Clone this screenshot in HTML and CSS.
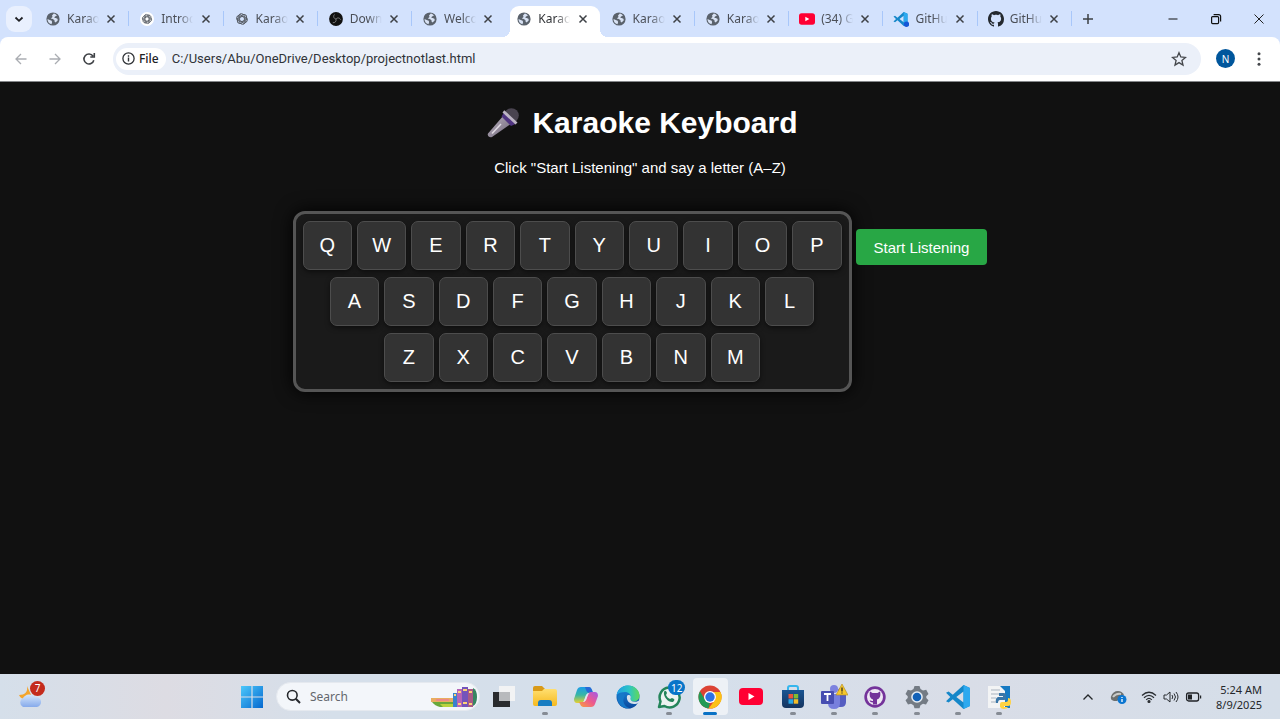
FILE: index.html
```html
<!DOCTYPE html>
<html lang="en">
<head>
<meta charset="utf-8">
<title>Karaoke Keyboard</title>
<link rel="stylesheet" href="styles.css">
</head>
<body>
<svg class="defs" aria-hidden="true">
  <defs>
    <linearGradient id="win" x1="0" y1="0" x2="1" y2="1"><stop offset="0" stop-color="#4cc8fb"/><stop offset="1" stop-color="#0568cf"/></linearGradient>
    <linearGradient id="cloud" x1="0" y1="0" x2="0" y2="1"><stop offset="0" stop-color="#d5e6fb"/><stop offset="1" stop-color="#86aaeb"/></linearGradient>
    <linearGradient id="folder" x1="0" y1="0" x2="0" y2="1"><stop offset="0" stop-color="#ffdf70"/><stop offset="1" stop-color="#f6b91f"/></linearGradient>
    <linearGradient id="cpa" x1="0" y1="0" x2="0" y2="1"><stop offset="0" stop-color="#1b9de8"/><stop offset=".5" stop-color="#37b6a5"/><stop offset="1" stop-color="#e8d12e"/></linearGradient>
    <linearGradient id="cpb" x1="1" y1="0" x2="0" y2="1"><stop offset="0" stop-color="#a259e8"/><stop offset=".5" stop-color="#ee5a8d"/><stop offset="1" stop-color="#f9a13c"/></linearGradient>
    <linearGradient id="edgea" x1="0" y1="0" x2="1" y2="0"><stop offset="0" stop-color="#1e9de6"/><stop offset=".55" stop-color="#2cc5c5"/><stop offset="1" stop-color="#62d957"/></linearGradient>
    <linearGradient id="edgeb" x1="0" y1="0" x2="0" y2="1"><stop offset="0" stop-color="#1b8ee0"/><stop offset="1" stop-color="#0c479b"/></linearGradient>
    <linearGradient id="store" x1="0" y1="0" x2="0" y2="1"><stop offset="0" stop-color="#1a5592"/><stop offset="1" stop-color="#15345f"/></linearGradient>
    <linearGradient id="mic" x1="0" y1="0" x2="1" y2="1"><stop offset="0" stop-color="#bdb5c2"/><stop offset="1" stop-color="#6c6376"/></linearGradient>
  </defs>
  <symbol id="globe" viewBox="0 0 14 14"><circle cx="7" cy="7" r="6.6" fill="#5a626c"/><path d="M7.8 1.6 6 3.5l.5 1.4L4.8 6.6l2 .4 1.7 1.2v1.2l1.2 1.1 2.100-2.200-.4-1.600-1.700-.8L8.400 6l.5-1.600 2-.7C10.300 2.700 9 1.800 7.800 1.600zM1.500 6.900l2.200 1.200 2 .6.4 1.600-.6 1.900C3 11.500 1.500 9.600 1.500 6.900z" fill="#d8e2f4"/></symbol>
  <symbol id="knot" viewBox="0 0 14 14"><g fill="none" stroke="currentColor" stroke-width=".9"><path id="petal" d="M7 4.300 10.300 6.200V9.900c0 1.900-2.200 3.100-3.900 2.100L3.700 10.400"/><use href="#petal" transform="rotate(60 7 7)"/><use href="#petal" transform="rotate(120 7 7)"/><use href="#petal" transform="rotate(180 7 7)"/><use href="#petal" transform="rotate(240 7 7)"/><use href="#petal" transform="rotate(300 7 7)"/></g></symbol>
  <symbol id="close" viewBox="0 0 10 10"><path d="M1.500 1.500l7 7M8.500 1.500l-7 7" stroke="currentColor" stroke-width="1.500"/></symbol>
  <symbol id="vscode" viewBox="0 0 24 24"><path d="M17.500 0 24 3v18l-6.500 3L6.800 14.300 2.600 17.600 0 16.300 4.300 12 0 7.700l2.600-1.300 4.200 3.300zM17.500 6.500 10.300 12l7.200 5.500z" fill="#1587c9" fill-rule="evenodd"/><path d="M17.500 0 24 3v18l-6.500 3z" fill="#2da9ef"/></symbol>
  <symbol id="yt" viewBox="0 0 24 17"><rect width="24" height="17" rx="4" fill="#ff0033"/><path d="M9.500 5v7L15.500 8.500z" fill="#fff"/></symbol>
  <symbol id="github" viewBox="0 0 16 16"><path fill="currentColor" d="M8 0C3.580 0 0 3.580 0 8c0 3.540 2.290 6.530 5.470 7.590.4.070.55-.17.55-.38 0-.19-.01-.82-.01-1.490-2.010.37-2.530-.49-2.690-.94-.09-.23-.48-.94-.82-1.130-.28-.15-.68-.52-.01-.53.63-.01 1.080.58 1.230.82.72 1.210 1.870.87 2.330.66.07-.52.28-.87.51-1.070-1.780-.2-3.640-.89-3.640-3.950 0-.87.31-1.590.82-2.150-.08-.2-.36-1.020.08-2.120 0 0 .67-.21 2.200.82.64-.18 1.320-.27 2-.27s1.360.09 2 .27c1.530-1.040 2.200-.82 2.200-.82.44 1.100.16 1.920.08 2.120.51.56.82 1.270.82 2.150 0 3.070-1.870 3.750-3.650 3.950.29.25.54.73.54 1.480 0 1.070-.01 1.930-.01 2.200 0 .21.15.46.55.38A8.010 8.010 0 0 0 16 8c0-4.420-3.580-8-8-8z"/></symbol>
</svg>

<header class="browser">
  <div class="tabstrip">
    <button class="tab-search" aria-label="Search tabs"><svg width="10" height="10" viewBox="0 0 10 10"><path d="M1.500 3.500 5 6.800l3.500-3.300" fill="none" stroke="#1f2023" stroke-width="1.800"/></svg></button>
    <nav class="tabs" aria-label="Tabs">
      <div class="tab"><svg class="fav"><use href="#globe"/></svg><button class="tab-title">Karao</button><button class="tab-close" aria-label="Close"><svg><use href="#close"/></svg></button></div>
      <div class="tab"><svg class="fav fav-white"><use href="#knot"/></svg><button class="tab-title">Introd</button><button class="tab-close" aria-label="Close"><svg><use href="#close"/></svg></button></div>
      <div class="tab"><svg class="fav"><use href="#knot"/></svg><button class="tab-title">Karao</button><button class="tab-close" aria-label="Close"><svg><use href="#close"/></svg></button></div>
      <div class="tab"><svg class="fav" viewBox="0 0 14 14"><circle cx="7" cy="7" r="6.900" fill="#111"/><g fill="none" stroke="#858585" stroke-width=".9"><path d="M7 7c-2.500-.5-3-3-1.500-4.500M7 7c1.700-1.900 4-1 4.700.8M7 7c.7 2.400-1.200 4-3.200 3.700"/></g></svg><button class="tab-title">Down</button><button class="tab-close" aria-label="Close"><svg><use href="#close"/></svg></button></div>
      <div class="tab plain"><svg class="fav"><use href="#globe"/></svg><button class="tab-title">Welco</button><button class="tab-close" aria-label="Close"><svg><use href="#close"/></svg></button></div>
      <div class="tab plain active"><svg class="fav"><use href="#globe"/></svg><button class="tab-title">Karao</button><button class="tab-close" aria-label="Close"><svg><use href="#close"/></svg></button></div>
      <div class="tab"><svg class="fav"><use href="#globe"/></svg><button class="tab-title">Karao</button><button class="tab-close" aria-label="Close"><svg><use href="#close"/></svg></button></div>
      <div class="tab"><svg class="fav"><use href="#globe"/></svg><button class="tab-title">Karao</button><button class="tab-close" aria-label="Close"><svg><use href="#close"/></svg></button></div>
      <div class="tab"><svg class="fav wide"><use href="#yt"/></svg><button class="tab-title">(34) G</button><button class="tab-close" aria-label="Close"><svg><use href="#close"/></svg></button></div>
      <div class="tab"><svg class="fav wide" viewBox="0 0 16 16"><use href="#vscode" width="15" height="14" y="1"/><circle cx="13.500" cy="13.300" r="2.700" fill="#1557d6"/></svg><button class="tab-title">GitHu</button><button class="tab-close" aria-label="Close"><svg><use href="#close"/></svg></button></div>
      <div class="tab"><svg class="fav wide dark"><use href="#github"/></svg><button class="tab-title">GitHu</button><button class="tab-close" aria-label="Close"><svg><use href="#close"/></svg></button></div>
    </nav>
    <button class="new-tab" aria-label="New tab"><svg width="12" height="12" viewBox="0 0 12 12"><path d="M6 1v10M1 6h10" stroke="#3c4043" stroke-width="1.500"/></svg></button>
    <div class="window-controls">
      <button aria-label="Minimize"><svg width="12" height="12" viewBox="0 0 12 12"><path d="M1.500 6h9" stroke="#111" stroke-width="1"/></svg></button>
      <button aria-label="Restore"><svg width="12" height="12" viewBox="0 0 12 12" fill="none" stroke="#111" stroke-width="1.200"><rect x="1.600" y="3.600" width="7" height="7" rx="1"/><path d="M3.600 1.600h5c1.200 0 2 .8 2 2v5"/></svg></button>
      <button aria-label="Close window"><svg width="12" height="12" viewBox="0 0 12 12"><path d="M1.500 1.500l9 9M10.500 1.500l-9 9" stroke="#222" stroke-width="1"/></svg></button>
    </div>
  </div>
  <div class="toolbar">
    <div class="nav-buttons">
      <button aria-label="Back"><svg width="14" height="14" viewBox="0 0 14 14" fill="none" stroke="#aaadb2" stroke-width="1.300"><path d="M12.500 7H2M7 2 2 7l5 5"/></svg></button>
      <button aria-label="Forward"><svg width="14" height="14" viewBox="0 0 14 14" fill="none" stroke="#aaadb2" stroke-width="1.300"><path d="M1.500 7H12M7 2l5 5-5 5"/></svg></button>
      <button aria-label="Reload"><svg width="14" height="14" viewBox="0 0 14 14" fill="none" stroke="#3f4246" stroke-width="1.600"><path d="M11.800 8.200A5 5 0 1 1 11 4M12.300 1v4H8.300"/></svg></button>
    </div>
    <div class="omnibox">
      <button class="chip"><svg width="13" height="13" viewBox="0 0 13 13"><circle cx="6.500" cy="6.500" r="5.600" fill="none" stroke="#2f3236" stroke-width="1.300"/><path d="M6.500 5.600v4M6.500 3.300v1.400" stroke="#2f3236" stroke-width="1.400"/></svg>File</button>
      <input class="url" aria-label="Address" value="C:/Users/Abu/OneDrive/Desktop/projectnotlast.html">
      <button class="star" aria-label="Bookmark"><svg width="16" height="16" viewBox="0 0 16 16"><path d="M8 1.700l1.800 4.300 4.700.4-3.600 3.100 1.100 4.600L8 11.600l-4 2.500 1.100-4.600L1.500 6.400 6.200 6z" fill="none" stroke="#44474b" stroke-width="1.300"/></svg></button>
    </div>
    <button class="avatar" aria-label="Profile">N</button>
    <button class="menu" aria-label="Menu"><svg width="4" height="16" viewBox="0 0 4 16" fill="#44474b"><circle cx="2" cy="2.800" r="1.500"/><circle cx="2" cy="8" r="1.500"/><circle cx="2" cy="13.200" r="1.500"/></svg></button>
  </div>
</header>

<main class="page">
  <h1><svg width="34" height="32" viewBox="0 0 34 32" aria-hidden="true"><path d="M2 26.500 17.500 8.500l8 8L6 30c-2.500 1.200-5-1.300-4-3.500z" fill="url(#mic)"/><circle cx="25.500" cy="8.500" r="7.300" fill="#4a4450"/><path d="M15.500 9.500 18 5.500 29.500 17l-4.500 2z" fill="#4f3480"/><path d="M18.300 3.300 31.500 15.500l-2 2L16.500 5.500z" fill="#bdb5c4"/><path d="M6 26.500 15 17" stroke="#e0dbe4" stroke-width="1.500"/></svg>Karaoke Keyboard</h1>
  <p class="hint">Click "Start Listening" and say a letter (A–Z)</p>
  <div class="stage">
    <div class="keyboard">
      <button class="key">Q</button><button class="key">W</button><button class="key">E</button><button class="key">R</button><button class="key">T</button><button class="key">Y</button><button class="key">U</button><button class="key">I</button><button class="key">O</button><button class="key">P</button>
      <button class="key home">A</button><button class="key">S</button><button class="key">D</button><button class="key">F</button><button class="key">G</button><button class="key">H</button><button class="key">J</button><button class="key">K</button><button class="key">L</button>
      <button class="key bottom">Z</button><button class="key">X</button><button class="key">C</button><button class="key">V</button><button class="key">B</button><button class="key">N</button><button class="key">M</button>
    </div>
    <button class="listen">Start Listening</button>
  </div>
</main>

<footer class="taskbar">
  <div class="task-left">
    <button class="weather" aria-label="Weather"><svg width="26" height="28" viewBox="0 0 26 28"><path d="M10 5c1 6-2 9-8 9 2 5 9 6 13 2z" fill="#f3a52d"/><path d="M6 26a5 5 0 0 1 0-9 7 6 0 0 1 12-1 5 5 0 0 1 2 10z" fill="url(#cloud)"/></svg><span class="badge red">7</span></button>
  </div>
  <div class="task-center">
    <button class="start" aria-label="Start"><svg width="22" height="22" viewBox="0 0 22 22"><path d="M0 0h10.400v10.400H0zM11.600 0H22v10.400H11.600zM0 11.600h10.400V22H0zM11.600 11.600H22V22H11.600z" fill="url(#win)"/></svg></button>
    <label class="search"><svg width="15" height="15" viewBox="0 0 15 15" fill="none" stroke="#25282c"><circle cx="6.300" cy="6.300" r="4.800" stroke-width="1.600"/><path d="M9.800 9.800 14 14" stroke-width="2"/></svg><input type="text" placeholder="Search" aria-label="Search"><svg class="books" width="48" height="22" viewBox="0 0 48 22"><path d="M1 16q12-2 24 0v5H9q-5-1-8-5z" fill="#68a83a"/><path d="M0 12h22v4H0z" fill="#e9ad60"/><path d="M5 13h13v2H5z" fill="#ec8a87"/><path d="M9 18h13v3H12z" fill="#b9d23d"/><path d="M22 7h4v14h-4z" fill="#3a82cd"/><path d="M26 3h5v18h-5z" fill="#b565b8"/><path d="M31 1h6v20h-6z" fill="#7454bb"/><path d="M37 3h5v18h-5z" fill="#aa5a86"/><path d="M42 2q4 2 4 9t-4 9z" fill="#388562"/><path d="M23 9h2M27 6h3M27 18h3M32 4h4M32 17h4M38 6h3M38 18h3" stroke="#ffd276" stroke-width="2"/></svg></label>
    <div class="apps">
      <button class="app" aria-label="Task view"><svg width="24" height="24" viewBox="0 0 24 24"><path d="M1 7h17v15H1z" fill="#292b2e"/><path d="M7 1h16v15H7z" fill="#f2f3f4"/><path d="M7 7h11v9H7z" fill="#b8babd"/></svg></button>
      <button class="app running" aria-label="File Explorer"><svg width="24" height="24" viewBox="0 0 24 24"><path d="M0 3q0-2 2-2h7l3 3-2 4H0z" fill="#d99a18"/><path d="M0 6h9l2-2h11q2 0 2 2v13q0 2-2 2H2q-2 0-2-2z" fill="url(#folder)"/><path d="M5 21v-3q0-3 3-3h8q3 0 3 3v3z" fill="#187dc2"/></svg></button>
      <button class="app" aria-label="Copilot"><svg width="24" height="24" viewBox="0 0 24 24"><path d="M7 2h8q2 0 3 3l1 3h-4q-2 0-3 2l-2 6q-1 2-3 2H3q-3 0-3-4l3-9q1-3 4-3z" fill="url(#cpa)"/><path d="M11 2h4q2 0 3 3l1 3h-4q-2 0-3-3z" fill="#2769d6"/><path d="M17 22H9q-2 0-3-3l-1-2h4q2 0 3-2l2-6q1-2 3-2h4q3 0 3 4l-3 8q-1 3-4 3z" fill="url(#cpb)"/><path d="M12 10.500q1-2.500 3.500-2.500-1 1-1.500 2l-2 5q-1 1.800-3 2 .7-.7 1-1.500z" fill="#dfe6f0"/></svg></button>
      <button class="app" aria-label="Edge"><svg width="24" height="24" viewBox="0 0 24 24"><circle cx="12" cy="12" r="11.500" fill="url(#edgeb)"/><path d="M.6 10C2 3 7 .5 12 .5c7 0 11.500 5 11.500 10 0 4-3 6-6 6-3 0-4-1.500-3-3 1-4-2-6.500-5.500-6.500S2 8 .6 10z" fill="url(#edgea)"/><path d="M9 11c-4 5 0 12 6 12-8 2-15-5-13-12 2-4 7-3 7 0z" fill="#1678c8"/><path d="M11 11c-1 5 3 8 7 8 2 0 3.500-.7 4.600-1.600 1-1.200.7-2-.4-1.500-4 1.800-8.200.6-7.700-2.400 1-2-.5-4-2-3.500-.7.200-1.200.4-1.500 1z" fill="#d7e1eb"/></svg></button>
      <button class="app running" aria-label="WhatsApp"><svg width="26" height="26" viewBox="0 0 26 26"><path d="M3 23l1.500-5.500A10 10 0 1 1 8.500 22z" fill="#edf3f1" stroke="#24855a" stroke-width="2.500" stroke-linejoin="round"/><path d="M8 8c1-2 2-1.500 3 1l-1 2c1 2 2 3 4 4l2-1c3 1 3 2 1 4-4 1-10-5-9-10z" fill="#24855a"/></svg><span class="badge blue">12</span></button>
      <button class="app running current" aria-label="Chrome"><svg width="24" height="24" viewBox="0 0 24 24"><circle cx="12" cy="12" r="11.500" fill="#dc4335"/><path d="M2 6.300 7.200 15A6 6 0 0 0 12 18l-1.500 5.500A11.500 11.500 0 0 1 2 6.300z" fill="#229a55"/><path d="M22.500 7A11.500 11.500 0 0 1 10.500 23.400L17 15q1.700-4-1.500-8z" fill="#fbc116"/><circle cx="12" cy="12" r="6" fill="#fff"/><circle cx="12" cy="12" r="4.700" fill="#2e71e5"/></svg></button>
      <button class="app" aria-label="YouTube"><svg width="24" height="17"><use href="#yt"/></svg></button>
      <button class="app running" aria-label="Store"><svg width="24" height="24" viewBox="0 0 24 24"><path d="M7 7V3q0-2 2-2h6q2 0 2 2v4" fill="none" stroke="#35b6ed" stroke-width="2"/><path d="M1 5h22v14q0 4-4 4H5q-4 0-4-4z" fill="url(#store)"/><path d="M7.500 9H12v4.500H7.500z" fill="#e9553b"/><path d="M12.700 9h4.500v4.500h-4.500z" fill="#7fbb32"/><path d="M7.500 14.200H12v4.500H7.500z" fill="#28a8e8"/><path d="M12.700 14.200h4.500v4.500h-4.500z" fill="#f4bd29"/></svg></button>
      <button class="app running" aria-label="Teams"><svg width="28" height="26" viewBox="0 0 28 26"><circle cx="21" cy="7" r="3" fill="#5b61c5"/><circle cx="14" cy="5" r="4" fill="#7c82df"/><path d="M16 11h10v7q0 5-5 5h-5z" fill="#555dc1"/><path d="M8 10h12v9q0 6-6 6t-6-6z" fill="#777fdd"/><rect x="1" y="7" width="13" height="13" rx="1" fill="#474eb1"/><path d="M4 10h7M7.500 10v7" stroke="#fff" stroke-width="1.800"/><path d="M22 0 28 11H16z" fill="#f6c62c" stroke="#b28c20" stroke-width=".6"/><path d="M22 3.500v4M22 8.500v1" stroke="#222" stroke-width="1.200"/></svg></button>
      <button class="app running" aria-label="GitHub Desktop"><svg width="22" height="22" viewBox="0 0 22 22"><circle cx="11" cy="11" r="10.700" fill="#74339a"/><circle cx="11" cy="11" r="8" fill="#eee8f3"/><path d="M6 5.500 8.500 7h5L16 5.500c1 4 0 7-3 8v5H9v-2c-2 0-3-1-3.500-2 1.500 0 2 .5 3.500.5v-1.500c-3-1-4-4-3-8z" fill="#74339a"/></svg></button>
      <button class="app running" aria-label="Settings"><svg width="24" height="24" viewBox="0 0 24 24"><path d="M9.500 1h5l1 3 2.500 1.400 3.200-.6 2.300 4.200-2.200 2.200v1.800l2.200 2.300-2.500 4.200-3-.8-2.500 1.500-1 3h-5l-1-3L6 18.700l-3 .8-2.500-4.200L2.700 13v-1.800L.5 9l2.300-4.200 3.200.6L8.500 4z" fill="#747b84"/><circle cx="12" cy="12" r="5.800" fill="#e5edf5"/><circle cx="12" cy="12" r="4.300" fill="#1261b7"/></svg></button>
      <button class="app running" aria-label="Visual Studio Code"><svg width="24" height="24"><use href="#vscode"/></svg></button>
      <button class="app running" aria-label="Python IDLE"><svg width="24" height="24" viewBox="0 0 24 24"><path d="M1 1h22v22H1z" fill="#167ac3"/><path d="M1 1h12l5 5v17H1z" fill="#f3f4f5"/><path d="M4 5h9M4 9h9M4 13h5M4 17h6" stroke="#a8b3bf"/><path d="M12 8h5q2 0 2 2v4q0 1-2 1h-4q-2 0-2 3H9q-1-5 2-6h5v-1h-4z" fill="#3976a8"/><path d="M21 13q3 0 3 4t-3 4h-4v1h4q-1 2-4 2t-4-2v-3q0-2 2-2h4q2 0 2-2z" fill="#ffd343"/></svg></button>
    </div>
  </div>
  <div class="tray">
    <button class="t-chevron" aria-label="Hidden icons"><svg width="12" height="12" viewBox="0 0 12 12"><path d="M1.500 8.500 6 4l4.500 4.500" fill="none" stroke="#24272a" stroke-width="1.300"/></svg></button>
    <button class="t-drive" aria-label="OneDrive"><svg width="18" height="16" viewBox="0 0 18 16"><path d="M4 12q-4-1-3-4.500Q3 2 8 2q4 0 6 4l-7 6z" fill="#6d706f"/><path d="M3 8q3-4 8-3" stroke="#c9cbc9" stroke-width="2" fill="none"/><circle cx="12" cy="10.500" r="4.500" fill="#0b76d1"/><path d="M12 10v3M12 8v1" stroke="#fff" stroke-width="1.300"/></svg></button>
    <button class="t-status" aria-label="Network, volume, battery">
      <svg width="16" height="14" viewBox="0 0 16 14" fill="none" stroke="#292d31" stroke-width="1.200"><path d="M1 5.500Q8-1 15 5.500M3 7.700Q8 3 13 7.700M5.200 9.800Q8 7 10.800 9.800"/><circle cx="8" cy="11.500" r="1" fill="#292d31"/></svg>
      <svg width="16" height="14" viewBox="0 0 16 14" fill="none" stroke="#292d31"><path d="M1 5h2.500L7 2v10L3.500 9H1zM9 5q1.500 2 0 4M11 3.500q3 3.500 0 7M13 2q4 5 0 10"/></svg>
      <svg width="17" height="14" viewBox="0 0 17 14"><rect x="1.600" y="3" width="12" height="8" rx="2" fill="none" stroke="#202327" stroke-width="1.300"/><path d="M3 4.500h4v5H3zM15 5.500h1.200v3H15z" fill="#202327"/></svg>
    </button>
    <button class="clock"><span>5:24 AM</span><span>8/9/2025</span></button>
  </div>
</footer>
</body>
</html>
```
FILE: styles.css
```css
* { box-sizing: border-box; }
body {
  margin: 0;
  min-height: 100vh;
  display: flex;
  flex-direction: column;
  background: #111;
  font-family: "Liberation Sans", sans-serif;
}
button, input {
  margin: 0;
  padding: 0;
  border: 0;
  background: none;
  font: inherit;
  color: inherit;
  outline: 0;
}
svg { display: block; flex: none; }
.defs { position: absolute; width: 0; height: 0; }

.browser, .taskbar { font-family: "Noto Sans", sans-serif; font-size: 12px; }
.browser { background: #d3e2fd; }
.tabstrip { display: flex; height: 37px; align-items: center; }
.tab-search {
  flex: none;
  width: 26px; height: 26px; margin: 0 3px 0 6px;
  display: grid; place-items: center;
  border-radius: 9px; background: #e9f0fe;
}
.tabs { flex: 1; min-width: 0; display: flex; align-self: stretch; }
.tab {
  position: relative;
  flex: 1; min-width: 0;
  display: flex; align-items: center;
  padding: 0 10px 0 11px;
  color: #4b4f57;
}
.tab::after {
  content: ""; position: absolute; right: 0; top: 11px;
  width: 1px; height: 15px; background: #a8c7fa;
}
.plain::after { display: none; }
.fav { width: 14px; height: 14px; color: #4f555c; }
.fav.wide { width: 16px; height: 16px; margin: 0 -1px; }
.fav.dark { color: #24292f; }
.fav-white { background: #fff; border-radius: 50%; padding: 1px; }
.tab-title {
  flex: 1; min-width: 0; margin: 0 2px 0 7px;
  overflow: hidden; white-space: nowrap; text-align: left;
  mask-image: linear-gradient(to right, #000 18px, transparent 32px);
}
.tab-close { flex: none; width: 16px; height: 16px; display: grid; place-items: center; color: #3e4146; }
.tab-close svg { width: 10px; height: 10px; }
.active { color: #303236; isolation: isolate; }
.active::before {
  content: ""; position: absolute; z-index: -1;
  inset: 6px 1px 0 4px;
  border-radius: 9px 9px 0 0; background: #fff;
}
.tab.active::after {
  display: block; z-index: -1;
  top: auto; bottom: 0; left: -4px; right: -7px;
  width: auto; height: 8px;
  background:
    radial-gradient(circle at 0 0, transparent 8px, #fff 8px) left / 8px 8px no-repeat,
    radial-gradient(circle at 100% 0, transparent 8px, #fff 8px) right / 8px 8px no-repeat;
}
.new-tab { flex: none; width: 32px; height: 32px; display: grid; place-items: center; }
.window-controls { display: flex; flex: none; margin-left: 47px; }
.window-controls button { width: 43px; height: 32px; display: grid; place-items: center; }

.toolbar {
  display: flex; align-items: center;
  height: 45px; padding-bottom: 1px;
  background: #fff; border-radius: 8px 8px 0 0;
  border-bottom: 1px solid #85878a;
}
.nav-buttons { display: flex; margin: 0 8px 0 4px; }
.nav-buttons button { width: 34px; height: 32px; display: grid; place-items: center; }
.omnibox {
  flex: 1; display: flex; align-items: center;
  height: 32px; padding: 0 14px 0 3px; margin-left: -1px;
  border-radius: 16px; background: #ebf0f9; color: #303338;
}
.chip {
  display: flex; align-items: center; gap: 4px;
  height: 22px; padding: 0 7px 0 6px;
  border-radius: 11px; background: #fff;
  color: #202124; font-weight: 500;
}
.url { flex: 1; min-width: 0; margin-left: 6px; font-family: Roboto, sans-serif; font-size: 13px; }
.avatar {
  width: 19px; height: 19px; margin: 0 20px 0 15px;
  border-radius: 50%; background: #00569c; color: #fff; font-size: 10px;
}
.menu { width: 8px; height: 24px; display: grid; place-items: center; margin-right: 17px; }

.page { flex: 1; color: #fff; text-align: center; padding: 22px 16px; }
h1 {
  display: flex; justify-content: center; align-items: center; gap: 12px;
  margin: 0; padding-left: 4px; font-size: 30px; line-height: 38px;
}
.hint { margin: 17px 0 34px; font-size: 15px; line-height: 18px; }
.stage { display: flex; justify-content: center; align-items: flex-start; gap: 4px; }
.keyboard {
  display: grid;
  grid-template-columns: repeat(20, 1fr);
  gap: 7px 5px;
  width: 559px; padding: 7px;
  border: 3px solid #555; border-radius: 12px;
  background: #1a1a1a;
  box-shadow: 0 0 18px #000;
}
.key {
  grid-column: span 2;
  height: 49px;
  border: 1px solid #4d4d4d; border-radius: 7px;
  background: #333; font-size: 20px;
  box-shadow: 0 2px 5px rgba(0, 0, 0, .5);
}
.key.home { grid-column: 2 / span 2; }
.key.bottom { grid-column: 4 / span 2; }
.listen {
  height: 36px; padding: 0 18px; margin-top: 18px;
  border-radius: 4px; background: #28a745; font-size: 15px;
}

.taskbar {
  display: flex; align-items: center; justify-content: space-between;
  height: 45px;
  background: linear-gradient(90deg, #d5dfea 0, #dddce3 13%, #d5dfea 26%, #d5dfeb 55%, #d9dde7 75%, #d5dee9 100%);
  color: #24272a;
}
.task-left { flex: 0 0 236px; padding-left: 17px; }
.weather { position: relative; width: 28px; height: 32px; display: block; }
.weather svg { margin-bottom: 4px; }
.badge {
  position: absolute; display: grid; place-items: center;
  height: 15px; color: #fff; font-size: 10px; line-height: 12px;
}
.badge.red { right: 0; top: 0; width: 15px; border-radius: 50%; background: #c42b1c; }
.badge.blue { left: 20px; top: 2px; width: 17px; border-radius: 8px; background: #0875c9; }
.task-center { display: flex; align-items: center; }
.start { width: 32px; height: 36px; display: grid; place-items: center; }
.search {
  display: flex; align-items: center;
  width: 204px; height: 29px; margin: 0 3px 0 8px; padding-left: 9px;
  border: 1px solid #e5e9ef; border-radius: 15px;
  background: #f3f6fa; overflow: hidden;
}
.search input { flex: 1; min-width: 0; margin-left: 9px; font-size: 12px; }
.search input::placeholder { color: #63676d; opacity: 1; }
.apps { display: grid; grid-template-columns: repeat(13, 1fr); width: 537px; }
.app { position: relative; height: 37px; display: grid; place-items: center; border-radius: 4px; }
.running::after {
  content: ""; position: absolute; bottom: 0; left: 50%; margin-left: -3px;
  width: 6px; height: 3px; border-radius: 2px; background: #858b94;
}
.current { background: #edf1f6; margin: 0 3px; }
.current::after { width: 14px; margin-left: -7px; background: #0871c5; }
.tray { flex: 1; display: flex; align-items: center; justify-content: flex-end; padding-right: 18px; }
.tray button { display: flex; align-items: center; }
.t-drive { margin: 0 13px 0 16px; }
.t-status { gap: 6px; }
.tray .clock {
  flex-direction: column; align-items: flex-end;
  margin-left: 14px; font-size: 11px; line-height: 15px;
}
```
